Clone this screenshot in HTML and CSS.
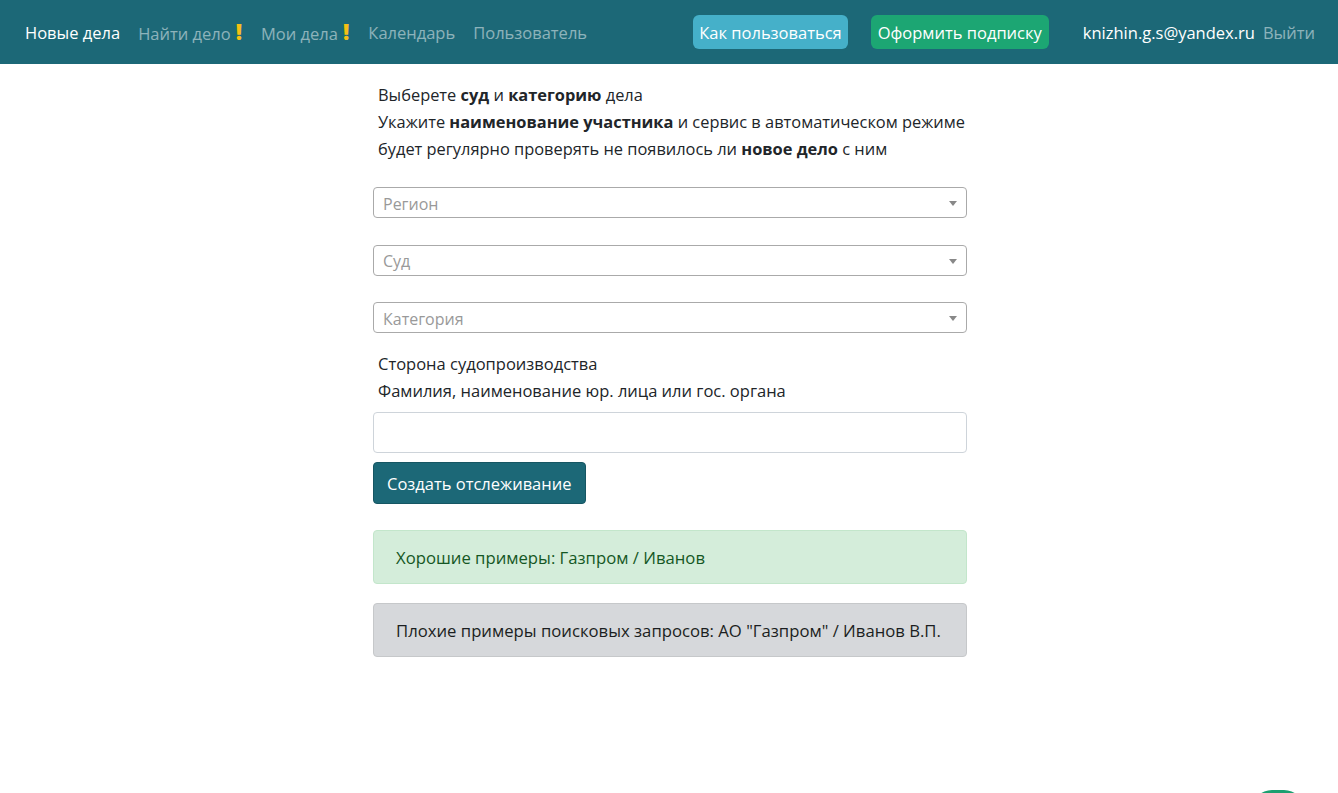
FILE: index.html
```html
<!DOCTYPE html>
<html lang="ru">
<head>
<meta charset="utf-8">
<title>Новые дела</title>
<link rel="stylesheet" href="styles.css">
</head>
<body>
<header class="navbar">
  <nav class="nav-left">
    <a class="nav-link active" href="#">Новые дела</a>
    <a class="nav-link" href="#">Найти дело<span class="warn">!</span></a>
    <a class="nav-link" href="#">Мои дела<span class="warn">!</span></a>
    <a class="nav-link" href="#">Календарь</a>
    <a class="nav-link" href="#">Пользователь</a>
  </nav>
  <div class="nav-right">
    <a class="btn btn-info" href="#">Как пользоваться</a>
    <a class="btn btn-success" href="#">Оформить подписку</a>
    <span class="user">knizhin.g.s@yandex.ru</span>
    <a class="nav-link logout" href="#">Выйти</a>
  </div>
</header>

<main class="content">
  <div class="intro">
    <p>Выберете <b>суд</b> и <b>категорию</b> дела</p>
    <p>Укажите <b>наименование участника</b> и сервис в автоматическом режиме<br>будет регулярно проверять не появилось ли <b>новое дело</b> с ним</p>
  </div>

  <div class="select"><span class="placeholder">Регион</span><span class="arrow"></span></div>
  <div class="select"><span class="placeholder">Суд</span><span class="arrow"></span></div>
  <div class="select"><span class="placeholder">Категория</span><span class="arrow"></span></div>

  <div class="label">
    <p>Сторона судопроизводства</p>
    <p>Фамилия, наименование юр. лица или гос. органа</p>
  </div>
  <input class="text-input" type="text">
  <button class="btn btn-primary" type="button">Создать отслеживание</button>

  <div class="alert alert-good">Хорошие примеры: Газпром / Иванов</div>
  <div class="alert alert-bad">Плохие примеры поисковых запросов: АО "Газпром" / Иванов В.П.</div>
</main>

<div class="fab"></div>
</body>
</html>
```
FILE: styles.css
```css
* { box-sizing: border-box; }

html, body {
  margin: 0;
  padding: 0;
  height: 100%;
  overflow: hidden;
}

body {
  font-family: "Open Sans", "Noto Sans", sans-serif;
  font-size: 16px;
  color: #212529;
  background: #fff;
}

p { margin: 0; }

.navbar {
  height: 64px;
  background: #1c6877;
  display: flex;
  align-items: center;
  justify-content: space-between;
  padding: 0 23px 0 25px;
}

.nav-left, .nav-right {
  display: flex;
  align-items: center;
}

.nav-link {
  color: rgba(255, 255, 255, 0.5);
  text-decoration: none;
  font-size: 16.5px;
  margin-right: 18px;
  white-space: nowrap;
}

.nav-link.active { color: #fff; }

.warn {
  color: #f5c014;
  font-weight: 800;
  font-size: 22px;
  margin-left: 5px;
  margin-right: 1px;
  line-height: 1;
}

.btn {
  display: inline-flex;
  align-items: center;
  height: 34px;
  padding: 0 6px;
  border-radius: 6px;
  color: #fff;
  text-decoration: none;
  font-size: 16.5px;
  white-space: nowrap;
  border: none;
  font-family: inherit;
}

.btn-info { background: #45b0c9; margin-right: 23px; }
.btn-success { background: #1ca673; margin-right: 34px; padding: 0 7px; }

.user {
  color: #fff;
  font-size: 16.5px;
  margin-right: 8px;
}

.logout { margin-right: 0; }

.content {
  width: 594px;
  margin-left: calc(50% - 296px);
  padding-top: 17px;
  display: flex;
  flex-direction: column;
  align-items: stretch;
}

.intro {
  padding-left: 5px;
  font-size: 16.4px;
  line-height: 27px;
  white-space: nowrap;
}

.intro b { font-weight: 700; }

.select {
  margin-top: 25px;
  height: 31px;
  border: 1px solid #aaa;
  border-radius: 4px;
  display: flex;
  align-items: center;
  justify-content: space-between;
  padding: 2px 9px 0 9px;
}

.select + .select { margin-top: 26.5px; }

.placeholder {
  color: #999;
  font-size: 16px;
}

.arrow {
  width: 0;
  height: 0;
  border-left: 4px solid transparent;
  border-right: 4px solid transparent;
  border-top: 5px solid #888;
}

.label {
  margin-top: 17px;
  padding-left: 5px;
  font-size: 16.5px;
  line-height: 27px;
}

.text-input {
  margin-top: 8px;
  height: 41px;
  border: 1px solid #ced4da;
  border-radius: 4px;
  font-family: inherit;
  font-size: 16px;
}

.btn-primary {
  align-self: flex-start;
  margin-top: 9px;
  height: 42px;
  padding: 0 13px;
  background: #1c6877;
  border: 1px solid #165663;
  border-radius: 4px;
  font-size: 16.5px;
}

.alert {
  margin-top: 26px;
  height: 54px;
  display: flex;
  align-items: center;
  padding: 0 22px;
  border: 1px solid transparent;
  border-radius: 4px;
  font-size: 16.7px;
}

.alert-good {
  background: #d4edda;
  border-color: #c3e6cb;
  color: #155724;
}

.alert-bad {
  margin-top: 19px;
  background: #d6d8db;
  border-color: #c6c8ca;
  color: #1b1e21;
}

.fab {
  position: fixed;
  left: 1252px;
  top: 790px;
  width: 52px;
  height: 40px;
  border-radius: 20px;
  background: #1c9f70;
}
```
